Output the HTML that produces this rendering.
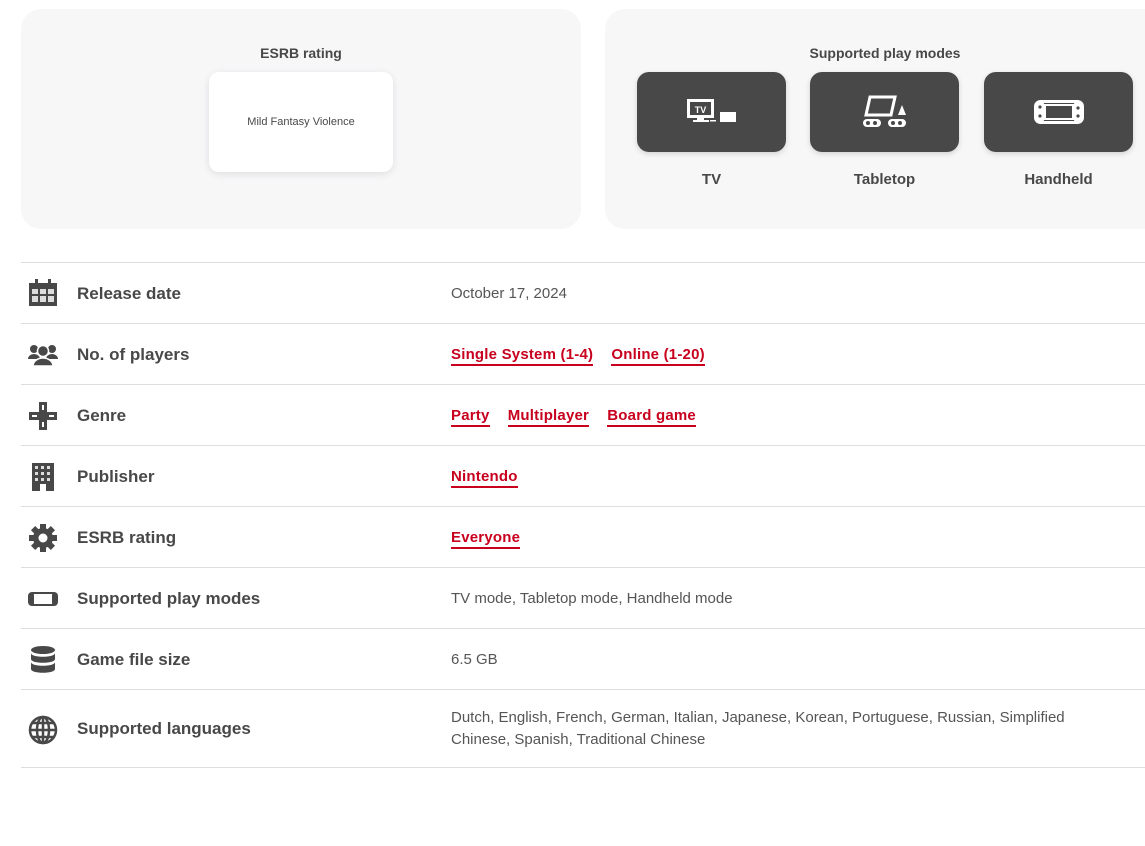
<!DOCTYPE html><html><head><style>
body{margin:0;width:1145px;height:846px;background:#fff;font-family:"Liberation Sans",sans-serif;color:#484848;position:relative;overflow:hidden}
.card{position:absolute;top:9px;height:220px;background:#f7f7f8;border-radius:20px}
.ttl{position:absolute;top:36px;font-size:14px;font-weight:bold;color:#484848;text-align:center}
.btn{position:absolute;top:72px;width:149px;height:80px;background:#484848;border-radius:12px;box-shadow:0 2px 6px rgba(0,0,0,.15);display:flex;align-items:center;justify-content:center}
.bl{position:absolute;top:171px;width:149px;text-align:center;font-size:15px;font-weight:bold}
.row{position:absolute;left:21px;right:0;border-top:1px solid #ddd}
.lab{position:absolute;left:56px;font-size:17px;font-weight:bold;color:#484848}
.val{position:absolute;left:430px;font-size:15px;color:#555;line-height:22px}
.val a{color:#c8001e;font-weight:bold;text-decoration:none;border-bottom:2px solid #c8001e;margin-right:14px;padding-bottom:1px;letter-spacing:0.2px}
.ic{position:absolute;left:7px}
</style></head><body>
<div class="card" style="left:21px;width:560px">
<div class="ttl" style="left:0;width:560px">ESRB rating</div>
<div style="position:absolute;left:188px;top:63px;width:184px;height:100px;background:#fff;border-radius:10px;box-shadow:0 2px 8px rgba(0,0,0,.1);display:flex;align-items:center;justify-content:center;font-size:11px;color:#484848">Mild Fantasy Violence</div>
</div>
<div class="card" style="left:605px;width:560px">
<div class="ttl" style="left:0;width:560px">Supported play modes</div>
</div>
<div class="btn" style="left:637px"><svg width="50" height="26" viewBox="0 0 50 26"><rect x="1.5" y="1.5" width="24" height="16" fill="none" stroke="#fff" stroke-width="3"/><text x="13.5" y="14" font-size="9" font-weight="bold" fill="#fff" text-anchor="middle" font-family="Liberation Sans">TV</text><rect x="10" y="18" width="7" height="3" fill="#fff"/><rect x="6" y="21" width="16" height="2" fill="#fff"/><rect x="23" y="21" width="6" height="1.5" fill="#fff"/><rect x="33" y="13" width="16" height="10" fill="#fff"/></svg></div>
<div class="btn" style="left:810px"><svg width="50" height="34" viewBox="0 0 50 34"><path d="M10 2h25l-4 18H6z" fill="none" stroke="#fff" stroke-width="3"/><path d="M42 10l4 10h-8z" fill="#fff"/><rect x="3" y="24" width="18" height="8" rx="4" fill="#fff"/><rect x="28" y="24" width="18" height="8" rx="4" fill="#fff"/><circle cx="8" cy="28" r="2" fill="#484848"/><circle cx="15" cy="28" r="2" fill="#484848"/><circle cx="33" cy="28" r="2" fill="#484848"/><circle cx="40" cy="28" r="2" fill="#484848"/></svg></div>
<div class="btn" style="left:984px"><svg width="50" height="24" viewBox="0 0 50 24"><rect x="1.5" y="1.5" width="47" height="21" rx="5" fill="none" stroke="#fff" stroke-width="3"/><rect x="11" y="5" width="28" height="14" fill="none" stroke="#fff" stroke-width="2"/><rect x="1.5" y="1.5" width="9" height="21" rx="4" fill="#fff"/><rect x="39.5" y="1.5" width="9" height="21" rx="4" fill="#fff"/><circle cx="6" cy="7" r="1.6" fill="#484848"/><circle cx="6" cy="16" r="1.6" fill="#484848"/><circle cx="44" cy="8" r="1.6" fill="#484848"/><circle cx="44" cy="16" r="1.6" fill="#484848"/></svg></div>
<div class="bl" style="left:637px">TV</div>
<div class="bl" style="left:810px">Tabletop</div>
<div class="bl" style="left:984px">Handheld</div>

<div class="row" style="top:262px;height:61px"><svg class="ic" style="top:16px" width="30" height="28" viewBox="0 0 30 28"><rect x="1" y="4" width="28" height="23" fill="#484848"/><rect x="7" y="0" width="3" height="7" fill="#484848"/><rect x="20" y="0" width="3" height="7" fill="#484848"/><g fill="#ddd"><rect x="4" y="10" width="6" height="5"/><rect x="12" y="10" width="6" height="5"/><rect x="20" y="10" width="6" height="5"/><rect x="4" y="17" width="6" height="6"/><rect x="12" y="17" width="6" height="6"/><rect x="20" y="17" width="6" height="6"/></g></svg><div class="lab" style="top:21px">Release date</div><div class="val" style="top:20px">October 17, 2024</div></div>
<div class="row" style="top:323px;height:61px"><svg class="ic" style="top:19px" width="30" height="24" viewBox="0 0 30 24"><circle cx="6" cy="6" r="4" fill="#484848"/><circle cx="24" cy="6" r="4" fill="#484848"/><path d="M0 16a6 5 0 0 1 12 0z M18 16a6 5 0 0 1 12 0z" fill="#484848"/><circle cx="15" cy="8" r="5.5" fill="#484848" stroke="#fff" stroke-width="1.5"/><path d="M5 23a10 8 0 0 1 20 0z" fill="#484848" stroke="#fff" stroke-width="1.5"/></svg><div class="lab" style="top:21px">No. of players</div><div class="val" style="top:20px"><a>Single System (1-4)</a> <a>Online (1-20)</a></div></div>
<div class="row" style="top:384px;height:61px"><svg class="ic" style="top:16px" width="30" height="30" viewBox="0 0 30 30"><path d="M11 1h8v10h10v8H19v10h-8V19H1v-8h10z" fill="#484848"/><rect x="14" y="4" width="2" height="5" fill="#fff"/><rect x="14" y="21" width="2" height="5" fill="#fff"/><rect x="4" y="14" width="5" height="2" fill="#fff"/><rect x="21" y="14" width="5" height="2" fill="#fff"/></svg><div class="lab" style="top:21px">Genre</div><div class="val" style="top:20px"><a>Party</a> <a>Multiplayer</a> <a>Board game</a></div></div>
<div class="row" style="top:445px;height:61px"><svg class="ic" style="top:16px" width="30" height="30" viewBox="0 0 30 30"><rect x="4" y="1" width="22" height="28" fill="#484848"/><g fill="#ddd"><rect x="7" y="4" width="3" height="3"/><rect x="13" y="4" width="3" height="3"/><rect x="19" y="4" width="3" height="3"/><rect x="7" y="10" width="3" height="3"/><rect x="13" y="10" width="3" height="3"/><rect x="19" y="10" width="3" height="3"/><rect x="7" y="16" width="3" height="3"/><rect x="13" y="16" width="3" height="3"/><rect x="19" y="16" width="3" height="3"/></g><rect x="12" y="22" width="6" height="7" fill="#fff"/></svg><div class="lab" style="top:21px">Publisher</div><div class="val" style="top:20px"><a>Nintendo</a></div></div>
<div class="row" style="top:506px;height:61px"><svg class="ic" style="top:16px" width="30" height="30" viewBox="0 0 30 30"><g fill="#484848" transform="translate(15 15)"><rect x="-3" y="-14" width="6" height="28"/><rect x="-3" y="-14" width="6" height="28" transform="rotate(45)"/><rect x="-3" y="-14" width="6" height="28" transform="rotate(90)"/><rect x="-3" y="-14" width="6" height="28" transform="rotate(135)"/><circle r="10"/></g><circle cx="15" cy="15" r="4.5" fill="#fff"/></svg><div class="lab" style="top:21px">ESRB rating</div><div class="val" style="top:20px"><a>Everyone</a></div></div>
<div class="row" style="top:567px;height:61px"><svg class="ic" style="top:24px" width="30" height="14" viewBox="0 0 30 14"><rect x="1" y="1" width="28" height="12" rx="3" fill="none" stroke="#484848" stroke-width="2"/><rect x="1" y="1" width="5" height="12" rx="2" fill="#484848"/><rect x="24" y="1" width="5" height="12" rx="2" fill="#484848"/></svg><div class="lab" style="top:21px">Supported play modes</div><div class="val" style="top:20px">TV mode, Tabletop mode, Handheld mode</div></div>
<div class="row" style="top:628px;height:61px"><svg class="ic" style="top:16px" width="30" height="30" viewBox="0 0 30 30"><ellipse cx="15" cy="5" rx="12" ry="4" fill="#484848"/><path d="M3 8c0 5 24 5 24 0v6c0 5-24 5-24 0z M3 17c0 5 24 5 24 0v7c0 5-24 5-24 0z" fill="#484848"/></svg><div class="lab" style="top:21px">Game file size</div><div class="val" style="top:20px">6.5 GB</div></div>
<div class="row" style="top:689px;height:77px;border-bottom:1px solid #ddd"><svg class="ic" style="top:25px" width="30" height="30" viewBox="0 0 30 30"><g fill="none" stroke="#484848" stroke-width="2.5"><circle cx="15" cy="15" r="13"/><ellipse cx="15" cy="15" rx="6" ry="13"/><path d="M15 2v26M2 15h26M4 8h22M4 22h22"/></g></svg><div class="lab" style="top:29px">Supported languages</div><div class="val" style="top:17px;width:670px">Dutch, English, French, German, Italian, Japanese, Korean, Portuguese, Russian, Simplified Chinese, Spanish, Traditional Chinese</div></div>
</body></html>
